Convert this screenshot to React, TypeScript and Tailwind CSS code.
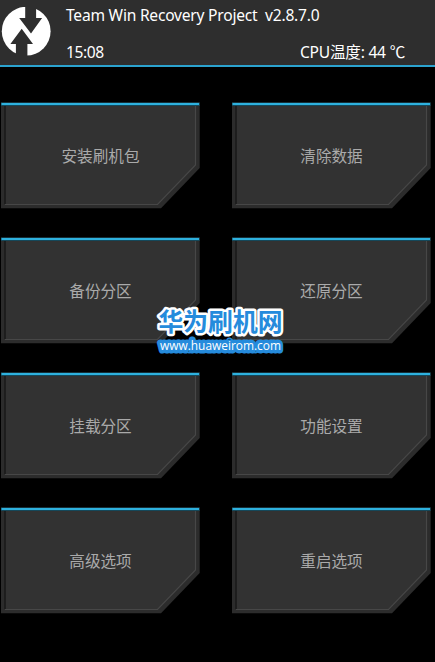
import React from 'react';

interface MenuButtonProps {
  label: string;
}

const rows = [
  ['安装刷机包', '清除数据'],
  ['备份分区', '还原分区'],
  ['挂载分区', '功能设置'],
  ['高级选项', '重启选项'],
];

const Logo: React.FC = () => (
  <svg className="mt-0.5 block h-[50px] w-[50px]" viewBox="0 0 50 50">
    <circle cx="25.2" cy="24.2" r="24.4" fill="#fff" />
    <path d="M24.2-1h10.9v12h6L30 26.5 18.2 11h6z" fill="#2e2e2e" />
    <path d="M20.7 21.7L32 37h-5.6v13H14.9V37H9.4z" fill="#2e2e2e" />
  </svg>
);

const Header: React.FC = () => (
  <header className="flex h-[67px] items-start border-b-2 border-[#2ba3cf] bg-[#2e2e2e] pl-px pt-[5px] text-white">
    <Logo />
    <div className="ml-[15px] flex-1 text-[15.6px] leading-[20px] tracking-[-0.23px]">
      <p className="whitespace-pre">Team Win Recovery Project  v2.8.7.0</p>
      <div className="mt-[17px] flex justify-between pr-[30px]">
        <span className="tracking-[-0.4px]">15:08</span>
        <span>CPU温度: 44 <span className="font-['Noto_Sans_CJK_SC',sans-serif] leading-none">℃</span></span>
      </div>
    </div>
  </header>
);

const MenuButton: React.FC<MenuButtonProps> = ({ label }) => (
  <button className="relative flex h-[107px] w-[199px] items-center justify-center text-[15.6px] text-[#aaa]">
    <svg className="absolute inset-0 h-full w-full" viewBox="0 0 199 107">
      <path d="M0 .5h198.7v65.5L160 106.3H0z" fill="#2c2c2c" />
      <path d="M4 4h190.5v58.5L156 102.5H4z" fill="#323232" />
      <path d="M4 102.5h152.5l38-39.5V4" fill="none" stroke="#474747" strokeWidth="1.2" />
      <path d="M4 4v98" stroke="#181818" strokeWidth="1.5" />
      <path d="M0 .5h198.7v3.5H0z" fill="#15485a" />
      <path d="M.5 1h197.5v2H.5z" fill="#2eb1de" />
    </svg>
    <span className="relative top-px">{label}</span>
  </button>
);

const Watermark: React.FC = () => (
  <svg className="pointer-events-none absolute left-[150px] top-[300px] h-[70px] w-[140px] overflow-visible" viewBox="0 0 140 70">
    <text x="8.5" y="30.8" textLength="124" lengthAdjust="spacingAndGlyphs" fill="#258bdc" stroke="#fff" strokeWidth="5" strokeLinejoin="round" paintOrder="stroke" className="font-['Noto_Sans_CJK_SC',sans-serif] text-[25px] font-bold">华为刷机网</text>
    <text x="10" y="50.3" textLength="121" lengthAdjust="spacingAndGlyphs" fill="#fff" stroke="#258bdc" strokeWidth="7" strokeLinejoin="round" paintOrder="stroke" className="font-['Open_Sans',sans-serif] text-[13.5px] font-medium">www.huaweirom.com</text>
  </svg>
);

const App: React.FC = () => {
  return (
    <div className="relative h-[662px] w-[435px] overflow-hidden bg-black font-['Noto_Sans','Noto_Sans_CJK_SC',sans-serif]">
      <Header />
      <main className="grid grid-cols-[199px_199px] gap-x-8 gap-y-7 pl-px pt-[35px]">
        {rows.flat().map((label) => (
          <MenuButton key={label} label={label} />
        ))}
      </main>
      <Watermark />
    </div>
  );
};

export default App;
